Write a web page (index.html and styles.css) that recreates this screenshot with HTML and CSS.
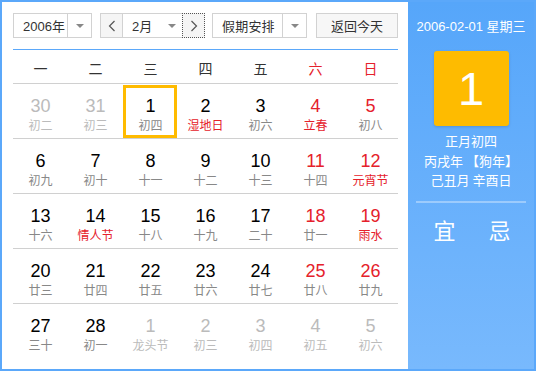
FILE: index.html
```html
<!DOCTYPE html>
<html>
<head>
<meta charset="utf-8">
<link rel="stylesheet" href="styles.css">
</head>
<body>
<div class="cal">
  <div class="main">
    <div class="controls">
      <div class="select year"><span class="sel-text">2006年</span><span class="sel-arrow"></span></div>
      <div class="month-ctl">
        <div class="nav-btn"><svg width="8" height="12" viewBox="0 0 8 12"><polyline points="6.5,1 1.5,6 6.5,11" fill="none" stroke="#555" stroke-width="1.2"/></svg></div>
        <div class="month-sel"><span class="sel-text">2月</span><span class="sel-arrow"></span></div>
        <div class="nav-btn next"><svg width="8" height="12" viewBox="0 0 8 12"><polyline points="1.5,1 6.5,6 1.5,11" fill="none" stroke="#555" stroke-width="1.2"/></svg></div>
      </div>
      <div class="select holiday"><span class="sel-text">假期安排</span><span class="sel-arrow"></span></div>
      <div class="today-btn">返回今天</div>
    </div>
    <div class="week">
      <span>一</span><span>二</span><span>三</span><span>四</span><span>五</span><span class="red">六</span><span class="red">日</span>
    </div>
    <div class="grid">
      <div class="row">
        <div class="cell other"><b>30</b><i>初二</i></div>
        <div class="cell other"><b>31</b><i>初三</i></div>
        <div class="cell sel"><b>1</b><i>初四</i></div>
        <div class="cell"><b>2</b><i class="red">湿地日</i></div>
        <div class="cell"><b>3</b><i>初六</i></div>
        <div class="cell wk"><b>4</b><i class="red">立春</i></div>
        <div class="cell wk"><b>5</b><i>初八</i></div>
      </div>
      <div class="row">
        <div class="cell"><b>6</b><i>初九</i></div>
        <div class="cell"><b>7</b><i>初十</i></div>
        <div class="cell"><b>8</b><i>十一</i></div>
        <div class="cell"><b>9</b><i>十二</i></div>
        <div class="cell"><b>10</b><i>十三</i></div>
        <div class="cell wk"><b>11</b><i>十四</i></div>
        <div class="cell wk"><b>12</b><i class="red">元宵节</i></div>
      </div>
      <div class="row">
        <div class="cell"><b>13</b><i>十六</i></div>
        <div class="cell"><b>14</b><i class="red">情人节</i></div>
        <div class="cell"><b>15</b><i>十八</i></div>
        <div class="cell"><b>16</b><i>十九</i></div>
        <div class="cell"><b>17</b><i>二十</i></div>
        <div class="cell wk"><b>18</b><i>廿一</i></div>
        <div class="cell wk"><b>19</b><i class="red">雨水</i></div>
      </div>
      <div class="row">
        <div class="cell"><b>20</b><i>廿三</i></div>
        <div class="cell"><b>21</b><i>廿四</i></div>
        <div class="cell"><b>22</b><i>廿五</i></div>
        <div class="cell"><b>23</b><i>廿六</i></div>
        <div class="cell"><b>24</b><i>廿七</i></div>
        <div class="cell wk"><b>25</b><i>廿八</i></div>
        <div class="cell wk"><b>26</b><i>廿九</i></div>
      </div>
      <div class="row last">
        <div class="cell"><b>27</b><i>三十</i></div>
        <div class="cell"><b>28</b><i>初一</i></div>
        <div class="cell other"><b>1</b><i>龙头节</i></div>
        <div class="cell other"><b>2</b><i>初三</i></div>
        <div class="cell other"><b>3</b><i>初四</i></div>
        <div class="cell other"><b>4</b><i>初五</i></div>
        <div class="cell other"><b>5</b><i>初六</i></div>
      </div>
    </div>
  </div>
  <div class="side">
    <div class="side-date">2006-02-01 星期三</div>
    <div class="big-day">1</div>
    <div class="lunar">
      <div>正月初四</div>
      <div>丙戌年 【狗年】</div>
      <div>己丑月 辛酉日</div>
    </div>
    <div class="side-line"></div>
    <div class="yiji"><span>宜</span><span>忌</span></div>
  </div>
</div>
</body>
</html>
```

FILE: styles.css
```css
*, *::before, *::after { box-sizing: border-box; }
html, body { margin: 0; padding: 0; }
body {
  font-family: "Liberation Sans", "Noto Sans CJK SC", sans-serif;
  background: #fff;
}
.cal {
  width: 536px;
  height: 371px;
  border: 2px solid #5ba8fa;
  display: flex;
  overflow: hidden;
}
.main {
  width: 406px;
  background: #fff;
  padding: 11px 10px 0 11px;
}
.controls {
  display: flex;
  height: 25px;
}
.select, .month-ctl, .today-btn {
  border: 1px solid #d2d2d2;
  height: 25px;
  display: flex;
  align-items: center;
  font-size: 13px;
  color: #333;
}
.select { background: #fff; }
.sel-text { flex: 1; padding-left: 8px; }
.sel-arrow {
  width: 24px;
  height: 100%;
  border-left: 1px solid #d2d2d2;
  position: relative;
}
.sel-arrow::after {
  content: "";
  position: absolute;
  left: 8px;
  top: 10px;
  border-left: 4px solid transparent;
  border-right: 4px solid transparent;
  border-top: 4px solid #888;
}
.year { width: 79px; }
.year .sel-text { padding-left: 9px; }
.month-ctl { width: 105px; margin-left: 8px; }
.nav-btn {
  width: 22px;
  height: 100%;
  display: flex;
  align-items: center;
  justify-content: center;
  background: #f5f5f5;
  border-right: 1px solid #d2d2d2;
}
.nav-btn.next {
  width: 23px;
  border: 1px dotted #555;
  margin: -1px -1px -1px 0;
  height: 25px;
}
.month-sel {
  flex: 1;
  display: flex;
  align-items: center;
  height: 100%;
  background: #fff;
}
.month-sel .sel-text { padding-left: 9px; }
.month-sel .sel-arrow { border-left: 0; width: 20px; }
.month-sel .sel-arrow::after { left: 6px; }
.holiday { width: 95px; margin-left: 7px; }
.holiday .sel-text { padding-left: 9px; letter-spacing: 0.2px; }
.today-btn {
  width: 82px;
  margin-left: 9px;
  justify-content: center;
  background: #f7f7f7;
  font-size: 13px;
}
.week {
  margin-top: 11px;
  border-top: 1px solid #5ba8fa;
  border-bottom: 1px solid #d0d0d0;
  height: 35px;
  display: grid;
  grid-template-columns: repeat(7, 55px);
  align-items: center;
  font-family: "Noto Sans CJK SC", sans-serif;
  font-size: 14px;
  color: #333;
}
.week span { text-align: center; padding-top: 3px; }
.red { color: #e5212b !important; }
.grid { width: 385px; }
.row {
  display: grid;
  grid-template-columns: repeat(7, 55px);
  height: 55px;
  border-bottom: 1px solid #d0d0d0;
}
.row.last { border-bottom: 0; }
.cell {
  position: relative;
  display: flex;
  flex-direction: column;
  align-items: center;
  padding-top: 12px;
}
.cell b {
  font-weight: normal;
  font-size: 18px;
  line-height: 20px;
  color: #000;
}
.cell i {
  font-style: normal;
  font-family: "Noto Sans CJK SC", sans-serif;
  font-size: 12px;
  line-height: 16px;
  margin-top: 1px;
  color: #888;
}
.cell.wk b { color: #e5212b; }
.cell.other b, .cell.other i { color: #bbb; }
.cell.sel::before {
  content: "";
  position: absolute;
  left: 0;
  top: 1px;
  width: 54px;
  height: 53px;
  border: 3px solid #ffbb00;
}
.side {
  flex: 1;
  background: linear-gradient(#56a6fa, #78b9fd);
  color: #fff;
  display: flex;
  flex-direction: column;
  align-items: center;
  font-family: "Liberation Sans", "Noto Sans CJK SC", sans-serif;
}
.side-date {
  margin-top: 16px;
  font-size: 13px;
  line-height: 18px;
}
.big-day {
  margin-top: 15px;
  width: 75px;
  height: 75px;
  background: #febb00;
  border-radius: 3px;
  box-shadow: 0 1px 3px rgba(0,0,0,0.15);
  font-size: 47px;
  line-height: 75px;
  text-align: center;
  font-weight: 300;
}
.lunar {
  margin-top: 5px;
  text-align: center;
  font-family: "Noto Sans CJK SC", sans-serif;
  font-size: 13px;
  line-height: 19.5px;
}
.side-line {
  margin-top: 11px;
  width: 110px;
  height: 2px;
  background: rgba(255,255,255,0.35);
}
.yiji {
  margin-top: 13px;
  display: flex;
  gap: 33px;
  padding-left: 2px;
  font-family: "Noto Sans CJK SC", sans-serif;
  font-size: 22px;
  line-height: 26px;
}
```
